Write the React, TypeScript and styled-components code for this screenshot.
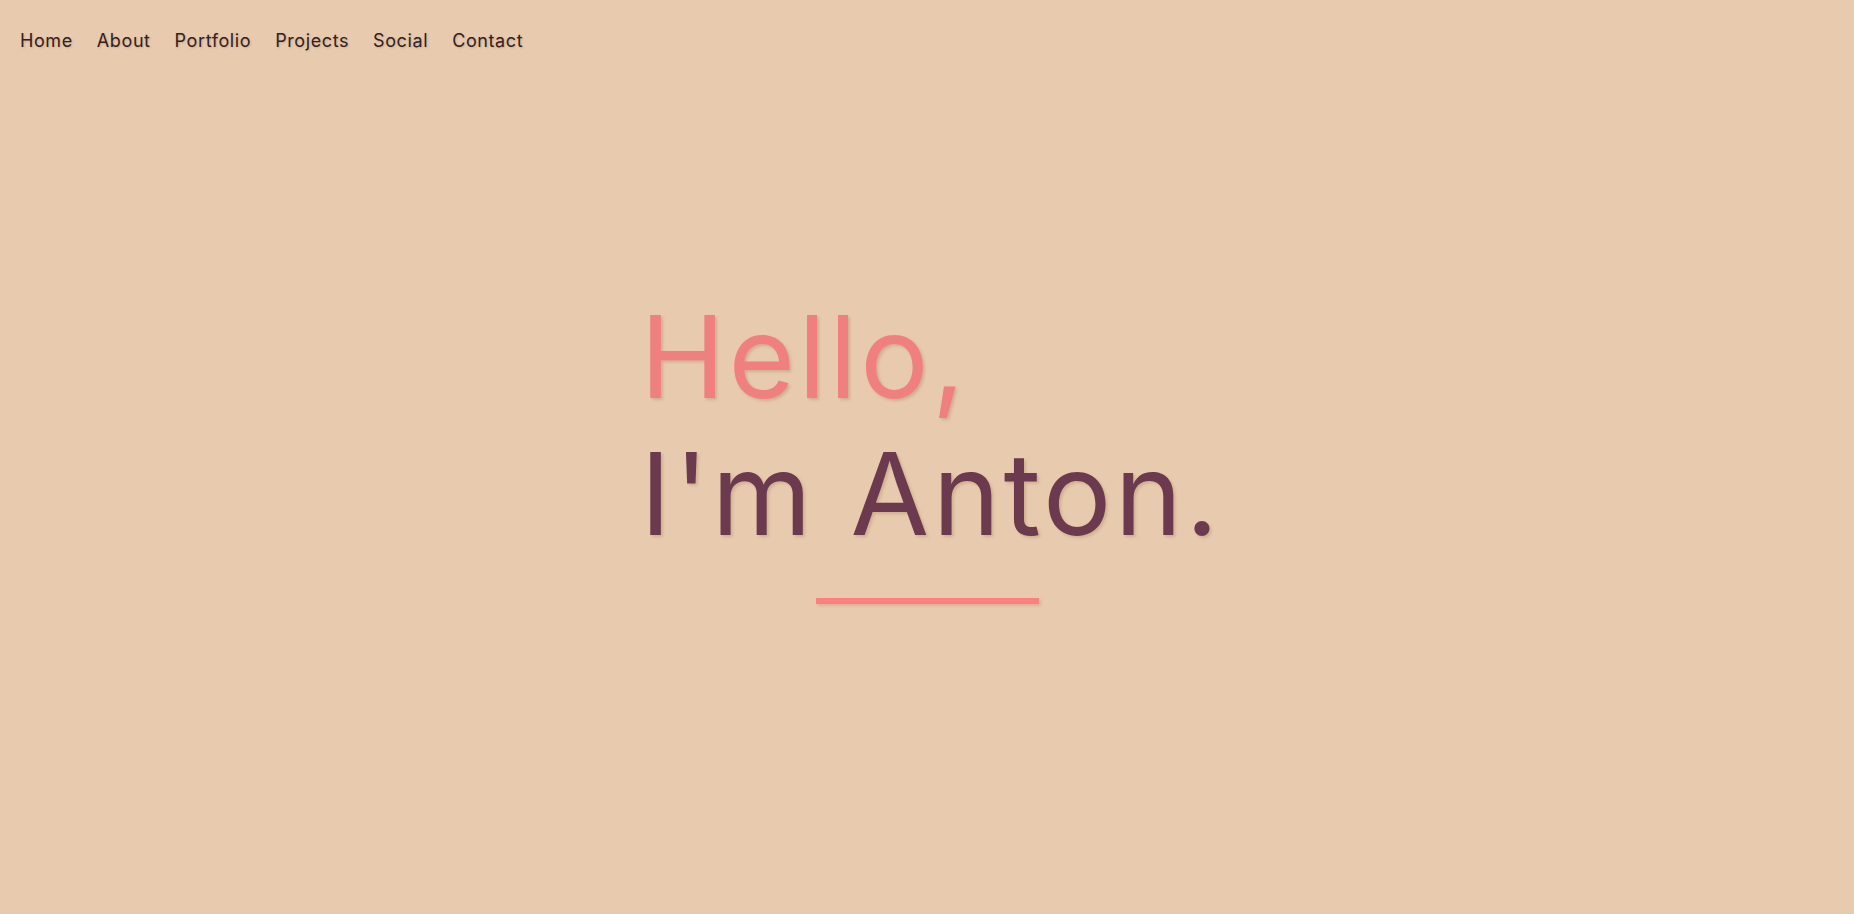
import styled, { createGlobalStyle } from 'styled-components';

const GlobalStyle = createGlobalStyle`
	html, body {
		margin: 0;
		padding: 0;
		background: #e8cbaf;
	}

	body {
		font-family: Inter, 'Liberation Sans', sans-serif;
	}
`;

const Page = styled.div`
	min-height: 100vh;
	background: #e8cbaf;
	display: flex;
	flex-direction: column;
`;

const Nav = styled.nav`
	display: flex;
	gap: 24px;
	padding: 29px 20px 0;
`;

const NavLink = styled.a`
	font-size: 18px;
	letter-spacing: 0.6px;
	color: #33211f;
	text-decoration: none;
	line-height: 24px;
	text-shadow: 1px 1px 2px rgba(120, 80, 50, 0.25);
`;

const Hero = styled.main`
	display: flex;
	flex-direction: column;
	align-items: center;
	padding-top: 235px;
`;

const Heading = styled.h1`
	margin: 0;
	padding-left: 8px;
	font-size: 114px;
	font-weight: 400;
	line-height: 137px;
	letter-spacing: 3.4px;
`;

const Line = styled.span<{ $accent?: boolean }>`
	display: block;
	color: ${({ $accent }) => ($accent ? '#f08080' : '#6b3a4e')};
	text-shadow: 2px 2px 3px rgba(160, 110, 70, 0.3);
`;

const Underline = styled.div`
	width: 223px;
	height: 6px;
	margin-top: 36px;
	background: #ff7f7f;
	box-shadow: 2px 2px 3px rgba(160, 110, 70, 0.25);
`;

const links = ['Home', 'About', 'Portfolio', 'Projects', 'Social', 'Contact'];

const App = () => {
	return (
		<Page>
			<GlobalStyle />
			<Nav>
				{links.map((link) => (
					<NavLink key={link} href={`#${link.toLowerCase()}`}>
						{link}
					</NavLink>
				))}
			</Nav>
			<Hero>
				<Heading>
					<Line $accent>Hello,</Line>
					<Line>I'm Anton.</Line>
				</Heading>
				<Underline />
			</Hero>
		</Page>
	);
};

export default App;
